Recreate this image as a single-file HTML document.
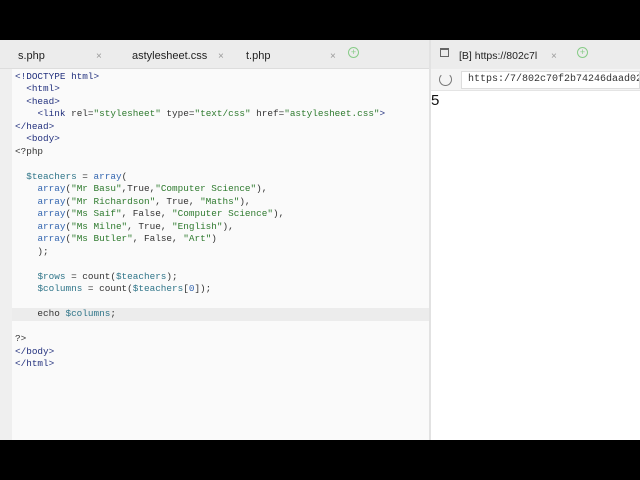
<!DOCTYPE html>
<html><head><style>
*{margin:0;padding:0;box-sizing:border-box}
body{width:640px;height:480px;background:#000;position:relative;overflow:hidden;font-family:"Liberation Sans",sans-serif}
#top{position:absolute;left:0;top:40px;width:640px;height:400px;background:#fafafa}
#tabs{position:absolute;left:0;top:0;width:430px;height:29px;background:#ececec;border-bottom:1px solid #ddd}
.tab{position:absolute;top:4px;height:25px;font-size:11px;color:#222;line-height:25px}
.x{position:absolute;font-size:10px;color:#999;top:0}
.plus{position:absolute;top:7px;width:11px;height:11px;border:1px solid #8c8;border-radius:50%;color:#8c8;font-size:9px;line-height:9px;text-align:center}
#gutter{position:absolute;left:0;top:29px;width:12px;height:371px;background:#efefef}
#code{position:absolute;left:15px;top:31px;font-family:"Liberation Mono",monospace;font-size:9.35px;line-height:12.48px;color:#333;white-space:pre}
#hl{position:absolute;left:12px;top:268px;width:418px;height:13px;background:#ececec}
.t{color:#23317e}.s{color:#2e7a2e}.k{color:#3466b0}.v{color:#2f7589}
#div{position:absolute;left:429px;top:0;width:2px;height:400px;background:#e2e2e2}
#right{position:absolute;left:431px;top:0;width:209px;height:400px;background:#fff}
#rtabs{position:absolute;left:0;top:0;width:209px;height:29px;background:#ececec}
#addr{position:absolute;left:0;top:29px;width:209px;height:22px;background:#f4f4f4;border-bottom:1px solid #e4e4e4}
#url{position:absolute;left:30px;top:2px;width:179px;height:18px;background:#fff;border:1px solid #ddd;font-family:"Liberation Mono",monospace;font-size:10px;line-height:16px;padding-left:6px;color:#333;white-space:nowrap;overflow:hidden}
</style></head><body>
<div id="top">
<div id="tabs">
<div class="tab" style="left:0;width:112px;padding-left:18px">s.php<span class="x" style="left:96px">×</span></div>
<div class="tab" style="left:120px;width:110px;padding-left:12px">astylesheet.css<span class="x" style="left:98px">×</span></div>
<div class="tab" style="left:235px;width:105px;padding-left:11px">t.php<span class="x" style="left:95px">×</span></div>
<div class="plus" style="left:348px">+</div>
</div>
<div id="gutter"></div>
<div id="hl"></div>
<div id="code"><span class="t">&lt;!DOCTYPE html&gt;</span>
  <span class="t">&lt;html&gt;</span>
  <span class="t">&lt;head&gt;</span>
    <span class="t">&lt;link</span> rel=<span class="s">"stylesheet"</span> type=<span class="s">"text/css"</span> href=<span class="s">"astylesheet.css"</span><span class="t">&gt;</span>
<span class="t">&lt;/head&gt;</span>
  <span class="t">&lt;body&gt;</span>
&lt;?php

  <span class="v">$teachers</span> = <span class="k">array</span>(
    <span class="k">array</span>(<span class="s">"Mr Basu"</span>,True,<span class="s">"Computer Science"</span>),
    <span class="k">array</span>(<span class="s">"Mr Richardson"</span>, True, <span class="s">"Maths"</span>),
    <span class="k">array</span>(<span class="s">"Ms Saif"</span>, False, <span class="s">"Computer Science"</span>),
    <span class="k">array</span>(<span class="s">"Ms Milne"</span>, True, <span class="s">"English"</span>),
    <span class="k">array</span>(<span class="s">"Ms Butler"</span>, False, <span class="s">"Art"</span>)
    );

    <span class="v">$rows</span> = count(<span class="v">$teachers</span>);
    <span class="v">$columns</span> = count(<span class="v">$teachers</span>[<span class="k">0</span>]);

    echo <span class="v">$columns</span>;

?&gt;
<span class="t">&lt;/body&gt;</span>
<span class="t">&lt;/html&gt;</span></div>
<div id="div"></div>
<div id="right">
<div id="rtabs">
<div style="position:absolute;left:9px;top:8px;width:9px;height:9px;border:1px solid #666;border-top-width:2px"></div>
<div class="tab" style="left:20px;width:112px;padding-left:8px;font-size:10.5px">[B] https://802c7l<span class="x" style="left:100px">×</span></div>
<div class="plus" style="left:146px">+</div>
</div>
<div id="addr">
<div style="position:absolute;left:8px;top:4px;width:13px;height:13px;border:1px solid #777;border-radius:50%;border-top-color:transparent"></div>
<div id="url">https:/7/802c70f2b74246daad027a3</div>
</div>
<div style="position:absolute;left:0;top:52px;font-size:15px;color:#111">5</div>
</div>
</div>
</body></html>
